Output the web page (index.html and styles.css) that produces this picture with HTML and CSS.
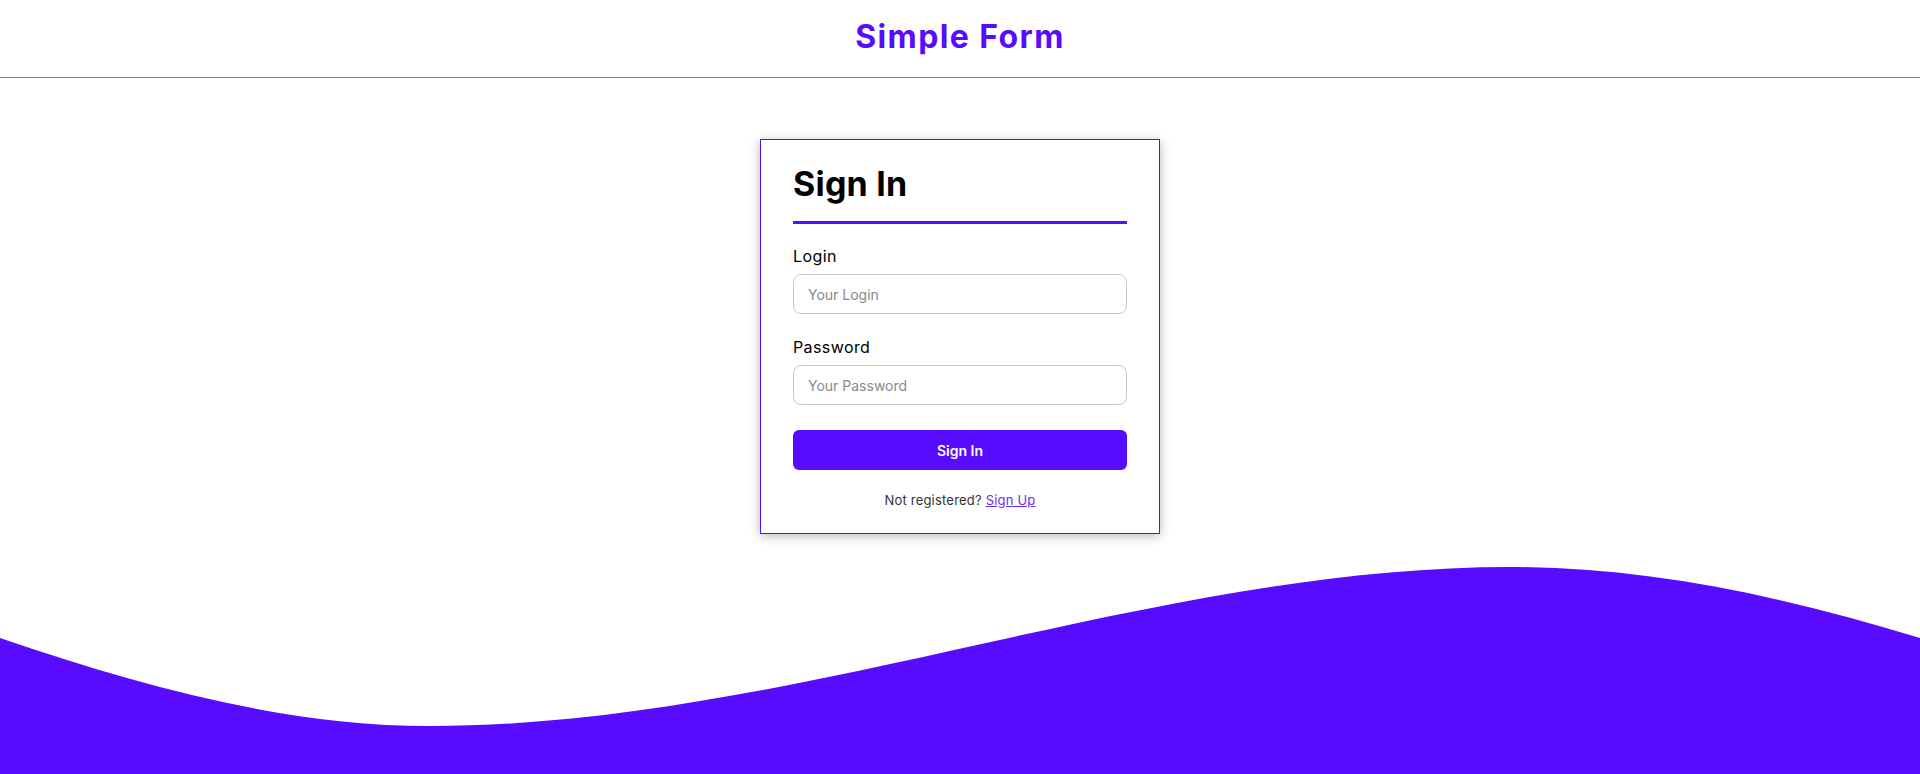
FILE: index.html
```html
<!DOCTYPE html>
<html lang="en">
<head>
<meta charset="utf-8">
<title>Simple Form</title>
<link rel="stylesheet" href="styles.css">
</head>
<body>
<header class="site-header">
  <h1 class="site-title">Simple Form</h1>
</header>
<main class="page">
  <form class="card">
    <h2 class="card-title">Sign In</h2>
    <div class="card-rule"></div>
    <div class="field">
      <label class="field-label" for="login">Login</label>
      <input class="field-input" id="login" type="text" placeholder="Your Login">
    </div>
    <div class="field">
      <label class="field-label" for="password">Password</label>
      <input class="field-input" id="password" type="password" placeholder="Your Password">
    </div>
    <button class="btn" type="button">Sign In</button>
    <p class="foot">Not registered? <a href="#" class="foot-link">Sign Up</a></p>
  </form>
</main>
<svg class="wave" viewBox="0 0 1920 214" preserveAspectRatio="none" aria-hidden="true">
  <path d="M0,78 C143,127 287,166 430,166 C790,166 1150,7 1510,7 C1647,7 1783,36 1920,78 L1920,214 L0,214 Z" fill="#570bff"/>
</svg>
</body>
</html>
```
FILE: styles.css
```css
* { box-sizing: border-box; }
html, body { margin: 0; padding: 0; }
body {
  position: relative;
  min-height: 774px;
  height: 774px;
  overflow: hidden;
  background: #fff;
  font-family: "Inter", "Open Sans", sans-serif;
  color: #000;
}
.site-header {
  height: 78px;
  border-bottom: 1px solid #8a8a8a;
  display: flex;
  align-items: center;
  justify-content: center;
}
.site-title {
  margin: 0;
  font-size: 32px;
  font-weight: 700;
  color: #570bff;
  letter-spacing: 1.4px;
  line-height: 1;
  padding-bottom: 4px;
}
.page {
  display: flex;
  justify-content: center;
  padding-top: 61px;
  position: relative;
  z-index: 1;
}
.card {
  width: 400px;
  border: 1px solid #570bff;
  background: #fff;
  box-shadow: 0 2px 10px rgba(0,0,0,0.28);
  padding: 24px 32px 25px;
  display: flex;
  flex-direction: column;
}
.card-title {
  margin: 0;
  font-size: 34px;
  font-weight: 700;
  line-height: 40px;
  letter-spacing: 0.2px;
}
.card-rule {
  height: 3px;
  background: #570bff;
  margin-top: 17px;
}
.field {
  display: flex;
  flex-direction: column;
  margin-top: 22px;
}
.field + .field { margin-top: 23px; }
.field-label {
  font-size: 16px;
  line-height: 20px;
  letter-spacing: 0.4px;
  margin-bottom: 8px;
}
.field-input {
  height: 40px;
  border: 1px solid #c8c8c8;
  border-radius: 8px;
  padding: 0 14px;
  font-family: inherit;
  font-size: 14px;
  color: #333;
  outline: none;
}
.field-input::placeholder { color: #8a8a8a; }
.btn {
  margin-top: 25px;
  height: 40px;
  border: none;
  border-radius: 6px;
  background: #570bff;
  color: #fff;
  font-family: inherit;
  font-size: 14px;
  font-weight: 600;
}
.foot {
  margin: 22px 0 0;
  text-align: center;
  font-size: 13px;
  line-height: 16px;
  letter-spacing: 0.2px;
  color: #333;
}
.foot-link { color: #6a2dff; }
.wave {
  position: absolute;
  left: 0;
  bottom: 0;
  width: 100%;
  height: 214px;
  display: block;
}
```
